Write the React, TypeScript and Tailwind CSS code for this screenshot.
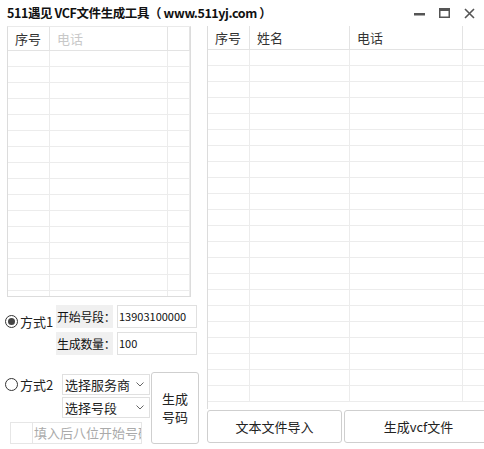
import React from 'react'

const font = { fontFamily: '"Microsoft YaHei", "Noto Sans CJK SC", "Noto Sans", sans-serif' }

function Grid({ cols, rows, header }: { cols: number[]; rows: number; header: { text: string; muted?: boolean }[] }) {
  return (
    <div className="flex flex-col overflow-hidden h-full">
      <div className="flex h-[24px] shrink-0 border-b border-[#e3e3e3]">
        {cols.map((w, i) => (
          <div
            key={i}
            className={`h-full flex items-center pl-[7px] text-[13px] border-r border-[#e3e3e3] shrink-0 whitespace-nowrap ${
              header[i]?.muted ? 'text-[#c8c8c8]' : 'text-[#333]'
            }`}
            style={{ width: w }}
          >
            {header[i]?.text}
          </div>
        ))}
      </div>
      {Array.from({ length: rows }).map((_, r) => (
        <div key={r} className="flex h-[16px] shrink-0 border-b border-[#ececec]">
          {cols.map((w, i) => (
            <div key={i} className="h-full border-r border-[#ececec] shrink-0" style={{ width: w }} />
          ))}
        </div>
      ))}
    </div>
  )
}

function Radio({ checked }: { checked?: boolean }) {
  return (
    <span className="w-[13px] h-[13px] shrink-0 rounded-full border border-[#333] flex items-center justify-center bg-white">
      {checked && <span className="w-[7px] h-[7px] rounded-full bg-[#444]" />}
    </span>
  )
}

function Select({ label }: { label: string }) {
  return (
    <div className="w-[88px] h-[21px] border border-[#e0e0e0] flex items-center justify-between pl-[2px] pr-[5px] text-[13px] text-[#222] whitespace-nowrap">
      <span>{label}</span>
      <svg width="8" height="5" viewBox="0 0 8 5" fill="none" stroke="#666" strokeWidth="1">
        <path d="M0.5 0.5 L4 4 L7.5 0.5" />
      </svg>
    </div>
  )
}

export default function App() {
  return (
    <div className="w-[484px] h-[449px] bg-white flex flex-col overflow-hidden select-none" style={font}>
      {/* Title bar */}
      <div className="h-[26px] flex items-center justify-between shrink-0">
        <span className="pl-[7px] text-[12.5px] font-bold text-[#111] tracking-[-0.4px] whitespace-nowrap">
          511遇见 VCF文件生成工具（ www.511yj.com ）
        </span>
        <div className="flex items-center gap-[14px] pr-[9px]">
          <svg width="11" height="11" viewBox="0 0 11 11">
            <rect x="0" y="5" width="11" height="2.5" fill="#555" />
          </svg>
          <svg width="11" height="10" viewBox="0 0 11 10" fill="none">
            <rect x="0.75" y="0.75" width="9.5" height="8.5" stroke="#555" strokeWidth="1.5" />
            <rect x="0" y="0" width="11" height="3" fill="#555" />
          </svg>
          <svg width="11" height="11" viewBox="0 0 11 11" stroke="#555" strokeWidth="1.6">
            <path d="M1 1 L10 10 M10 1 L1 10" />
          </svg>
        </div>
      </div>

      <div className="flex flex-1 min-h-0">
        {/* Left */}
        <div className="w-[207px] shrink-0 flex flex-col">
          <div className="ml-[7px] w-[184px] h-[271px] border border-[#dcdcdc] border-t-[#eaeaea]">
            <Grid cols={[42, 118, 22]} rows={16} header={[{ text: '序号' }, { text: '电话', muted: true }, { text: '' }]} />
          </div>

          <div className="flex items-start mt-[8px]">
            <div className="w-[56px] flex items-center gap-[2px] pl-[5px] mt-[7px] whitespace-nowrap">
              <Radio checked />
              <span className="text-[13px] text-[#222]">方式1</span>
            </div>
            <div className="flex flex-col gap-[4px]">
              <div className="flex items-center">
                <div className="w-[57px] h-[23px] bg-[#f0f0f0] flex items-center pl-[1px] text-[12px] tracking-[-0.3px] text-[#111] whitespace-nowrap">
                  开始号段：
                </div>
                <div className="ml-[4px] w-[80px] h-[23px] border border-[#e0e0e0] flex items-center pl-[1px] text-[11px] text-[#111] whitespace-nowrap">
                  13903100000
                </div>
              </div>
              <div className="flex items-center">
                <div className="w-[57px] h-[23px] bg-[#f0f0f0] flex items-center pl-[1px] text-[12px] tracking-[-0.3px] text-[#111] whitespace-nowrap">
                  生成数量：
                </div>
                <div className="ml-[4px] w-[80px] h-[23px] border border-[#e0e0e0] flex items-center pl-[1px] text-[11px] text-[#111]">
                  100
                </div>
              </div>
            </div>
          </div>

          <div className="flex mt-[17px]">
            <div className="flex flex-col">
              <div className="flex items-start">
                <div className="w-[62px] flex items-center gap-[2px] pl-[5px] mt-[3px] whitespace-nowrap">
                  <Radio />
                  <span className="text-[13px] text-[#222]">方式2</span>
                </div>
                <div className="flex flex-col gap-[2px] mt-[2px]">
                  <Select label="选择服务商" />
                  <Select label="选择号段" />
                </div>
              </div>
              <div className="ml-[10px] mt-[4px] w-[132px] h-[22px] border border-[#e6e6e6] flex overflow-hidden">
                <div className="w-[22px] h-full shrink-0 border-r border-[#e6e6e6]" />
                <span className="pl-[1px] text-[13px] text-[#aaa] leading-[20px] whitespace-nowrap">
                  填入后八位开始号码
                </span>
              </div>
            </div>
            <button className="ml-[1px] w-[48px] h-[72px] border border-[#cfcfcf] rounded-[3px] bg-white flex flex-col items-center justify-center text-[13px] text-[#222] leading-[18px]">
              <span>生成</span>
              <span>号码</span>
            </button>
          </div>
        </div>

        {/* Right */}
        <div className="flex-1 flex flex-col">
          <div className="h-[383px] border-l border-[#dcdcdc]">
            <Grid
              cols={[42, 100, 113, 30]}
              rows={22}
              header={[{ text: '序号' }, { text: '姓名' }, { text: '电话' }, { text: '' }]}
            />
          </div>
          <div className="flex gap-[2px] mt-[1px]">
            <button className="w-[135px] h-[33px] border border-[#cfcfcf] rounded-[3px] bg-white text-[13px] text-[#222]">
              文本文件导入
            </button>
            <button className="flex-1 h-[33px] border border-[#cfcfcf] rounded-[3px] bg-white text-[13px] text-[#222]">
              生成vcf文件
            </button>
          </div>
        </div>
      </div>
    </div>
  )
}
